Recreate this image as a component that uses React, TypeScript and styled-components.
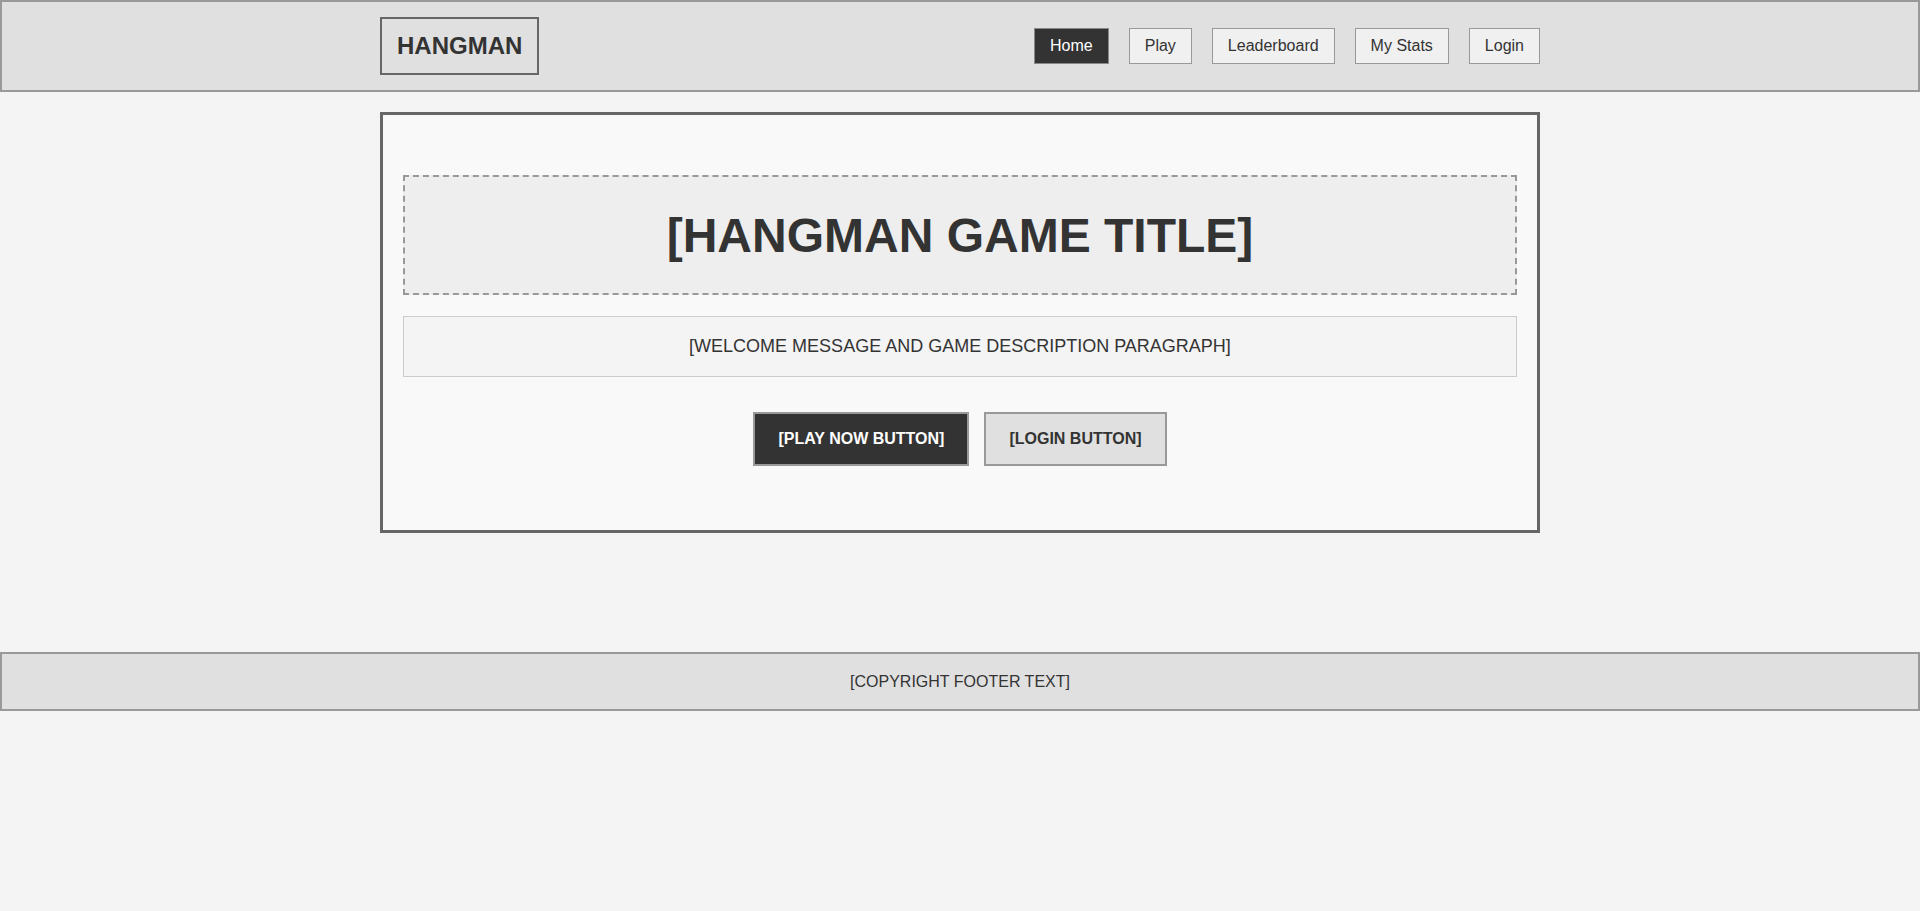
import styled, { createGlobalStyle } from "styled-components";

const GlobalStyle = createGlobalStyle`
    * {
        box-sizing: border-box;
    }
    body {
        margin: 0;
        background: #f4f4f4;
        color: #333;
        font-family: "Liberation Sans", Arial, sans-serif;
    }
`;

const Header = styled.header`
    width: 100%;
    background: #e0e0e0;
    border: 2px solid #999;
`;

const HeaderInner = styled.div`
    max-width: 1160px;
    margin: 0 auto;
    padding: 15px 0 15px;
    display: flex;
    justify-content: space-between;
    align-items: center;
`;

const Logo = styled.div`
    border: 2px solid #666;
    padding: 13px 15px;
    font-size: 24px;
    font-weight: bold;
    color: #333;
`;

const Nav = styled.nav`
    display: flex;
    gap: 20px;
`;

const NavLink = styled.a<{ active?: boolean }>`
    display: block;
    padding: 8px 15px;
    font-size: 16px;
    line-height: 1.15;
    border: 1px solid ${(props) => (props.active ? "#888" : "#999")};
    background: ${(props) => (props.active ? "#333" : "#f0f0f0")};
    color: ${(props) => (props.active ? "#fff" : "#333")};
    text-decoration: none;
    cursor: pointer;
`;

const Main = styled.main`
    max-width: 1160px;
    margin: 20px auto 119px;
    padding: 40px 20px;
    background: #f9f9f9;
    border: 3px solid #666;
`;

const TitleBox = styled.div`
    margin: 20px 0 21px;
    padding: 30.5px 20px;
    background: #eee;
    border: 2px dashed #999;
    text-align: center;

    h1 {
        margin: 0;
        font-size: 48px;
        line-height: 1.15;
        font-weight: bold;
        color: #333;
    }
`;

const Description = styled.div`
    padding: 19px 20px;
    background: #f4f4f4;
    border: 1px solid #ccc;
    text-align: center;
    font-size: 18px;
    line-height: 1.15;
    color: #333;
`;

const ButtonRow = styled.div`
    display: flex;
    justify-content: center;
    gap: 15px;
    margin: 35.5px 0 24.5px;
`;

const Button = styled.button<{ primary?: boolean }>`
    padding: 15.6px 23px;
    font-family: "Liberation Sans", Arial, sans-serif;
    font-size: 16px;
    line-height: 1.15;
    font-weight: bold;
    border: 2px solid #999;
    background: ${(props) => (props.primary ? "#333" : "#e0e0e0")};
    color: ${(props) => (props.primary ? "#fff" : "#333")};
    cursor: pointer;
`;

const Footer = styled.footer`
    width: 100%;
    background: #e0e0e0;
    border: 2px solid #999;
    padding: 18.3px 0;
    text-align: center;
    font-size: 16px;
    line-height: 1.15;
    color: #333;
`;

const navItems = ["Home", "Play", "Leaderboard", "My Stats", "Login"];

const App = () => {
    return (
        <>
            <GlobalStyle />
            <Header>
                <HeaderInner>
                    <Logo>HANGMAN</Logo>
                    <Nav>
                        {navItems.map((item) => (
                            <NavLink key={item} active={item === "Home"}>
                                {item}
                            </NavLink>
                        ))}
                    </Nav>
                </HeaderInner>
            </Header>
            <Main>
                <TitleBox>
                    <h1>[HANGMAN GAME TITLE]</h1>
                </TitleBox>
                <Description>[WELCOME MESSAGE AND GAME DESCRIPTION PARAGRAPH]</Description>
                <ButtonRow>
                    <Button primary>[PLAY NOW BUTTON]</Button>
                    <Button>[LOGIN BUTTON]</Button>
                </ButtonRow>
            </Main>
            <Footer>[COPYRIGHT FOOTER TEXT]</Footer>
        </>
    );
};

export default App;
